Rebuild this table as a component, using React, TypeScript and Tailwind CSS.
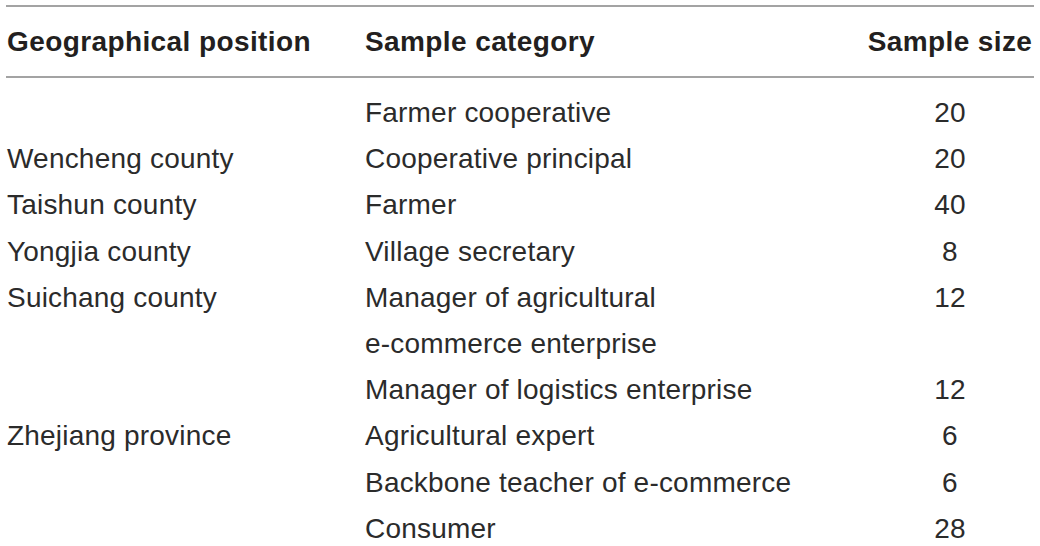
const rows: { geo: string; cat: string[]; size: string }[] = [
  { geo: "", cat: ["Farmer cooperative"], size: "20" },
  { geo: "Wencheng county", cat: ["Cooperative principal"], size: "20" },
  { geo: "Taishun county", cat: ["Farmer"], size: "40" },
  { geo: "Yongjia county", cat: ["Village secretary"], size: "8" },
  {
    geo: "Suichang county",
    cat: ["Manager of agricultural", "e-commerce enterprise"],
    size: "12",
  },
  { geo: "", cat: ["Manager of logistics enterprise"], size: "12" },
  { geo: "Zhejiang province", cat: ["Agricultural expert"], size: "6" },
  { geo: "", cat: ["Backbone teacher of e-commerce"], size: "6" },
  { geo: "", cat: ["Consumer"], size: "28" },
];

export default function App() {
  return (
    <div
      className="w-[1040px] h-[546px] bg-white px-[6px] pt-[5px] overflow-hidden text-[#231f20]"
      style={{ fontFamily: '"Liberation Sans", Arial, sans-serif' }}
    >
      <table className="w-full border-collapse">
        <thead>
          <tr className="border-t-2 border-b-2 border-[#a3a3a3] text-[28px] font-bold tracking-[0.4px]">
            <th className="h-[71px] p-0 pl-[1px] text-left w-[359px]">
              Geographical position
            </th>
            <th className="h-[71px] p-0 text-left">Sample category</th>
            <th className="h-[71px] p-0 pr-[1px] text-center w-[167px]">
              Sample size
            </th>
          </tr>
        </thead>
        <tbody className="text-[#2b2b2b]">
          {rows.map((r, i) => (
            <tr
              key={i}
              className="align-top text-[28px] leading-[46.2px] tracking-[0.2px]"
            >
              <td className={`p-0 pl-[1px] ${i === 0 ? "pt-[12px]" : ""}`}>
                {r.geo}
              </td>
              <td className={`p-0 ${i === 0 ? "pt-[12px]" : ""}`}>
                {r.cat.map((c, j) => (
                  <div key={j}>{c}</div>
                ))}
              </td>
              <td className={`p-0 pr-[1px] text-center ${i === 0 ? "pt-[12px]" : ""}`}>
                {r.size}
              </td>
            </tr>
          ))}
        </tbody>
      </table>
    </div>
  );
}
